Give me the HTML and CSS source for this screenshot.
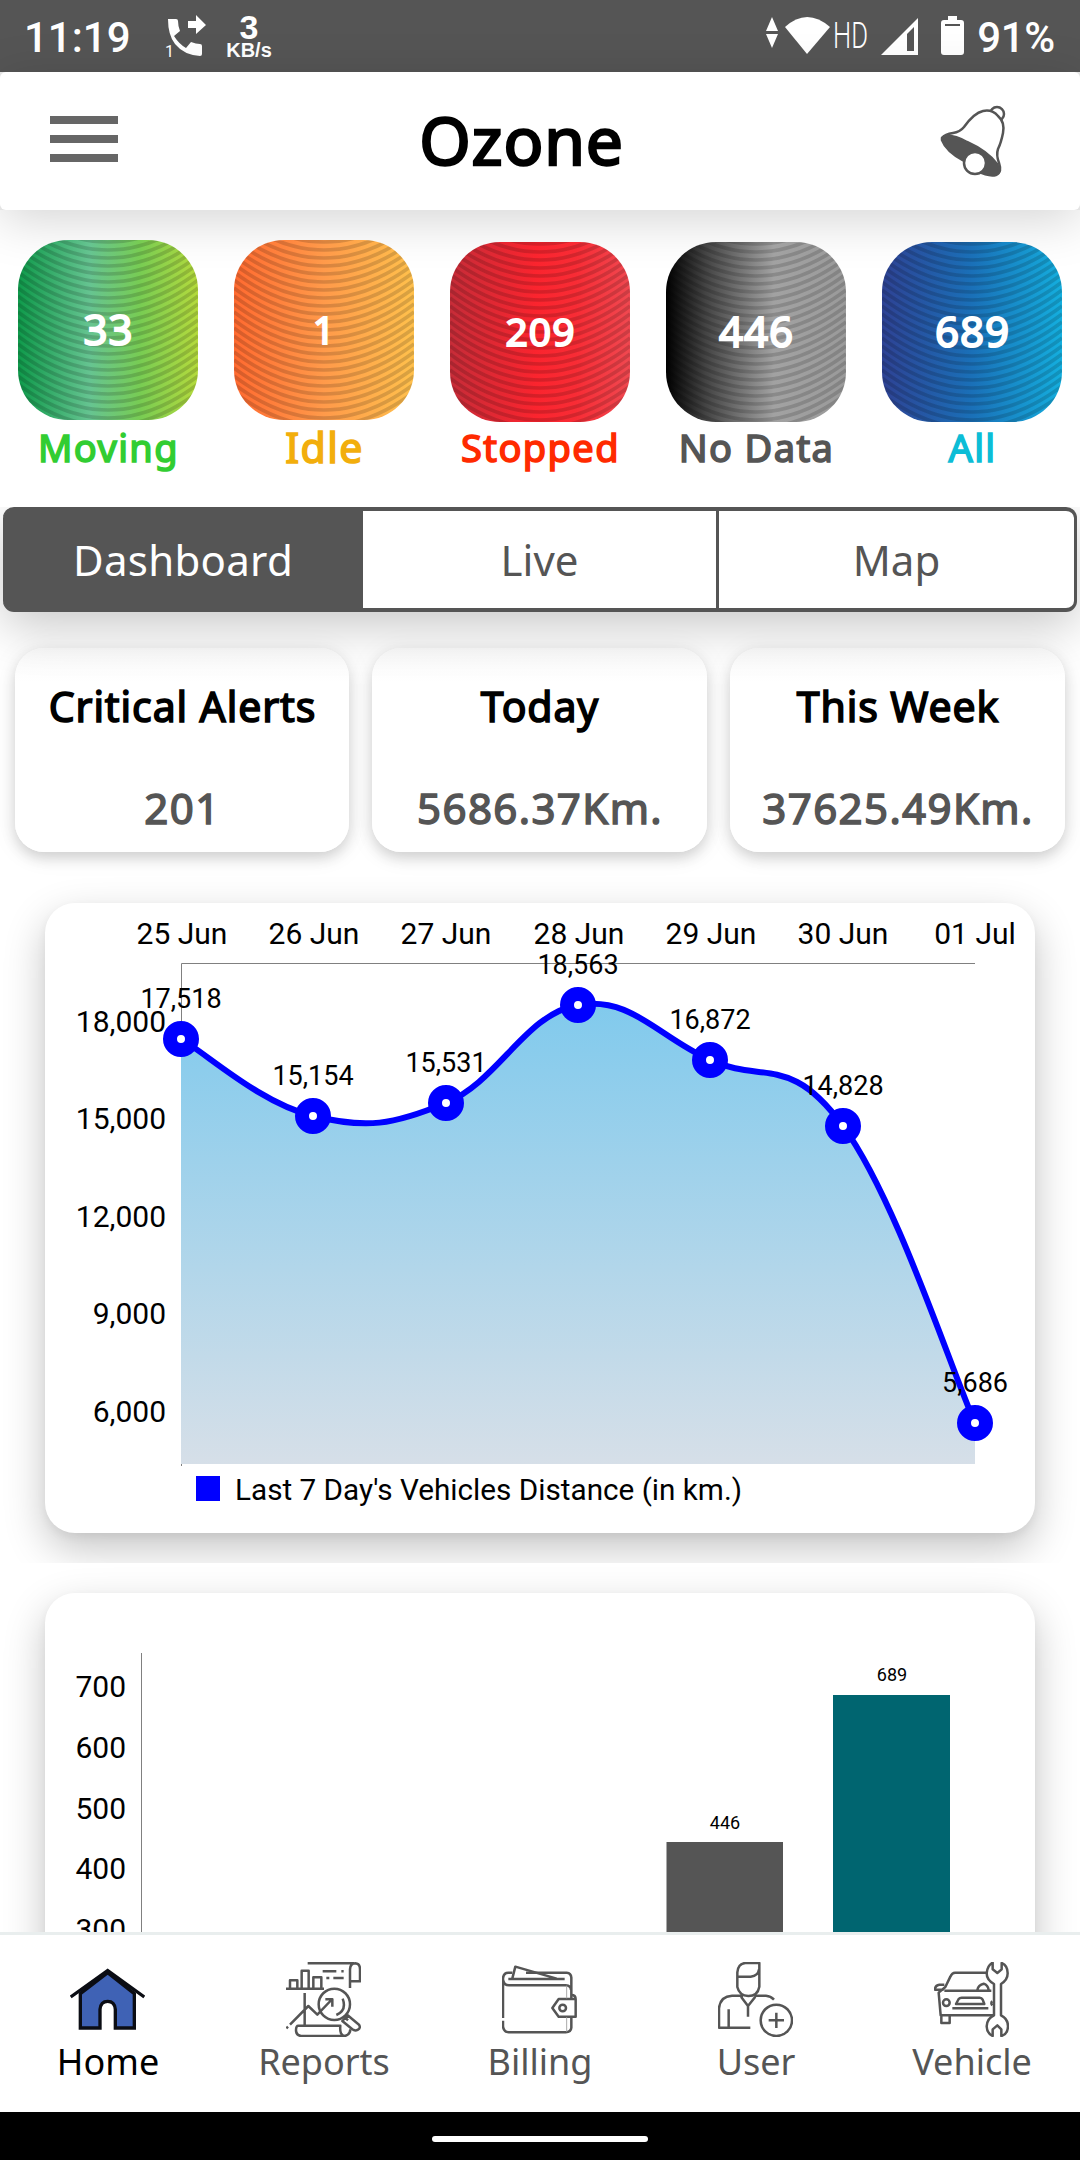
FILE: index.html
```html
<!DOCTYPE html>
<html lang="en">
<head>
    <meta charset="UTF-8">
    <meta name="viewport" content="width=device-width, initial-scale=1.0">
    <title>Ozone</title>
    <link rel="stylesheet" href="styles.css">
</head>
<body>
    <!-- Status Bar -->
    <div class="status-bar">
        <span class="clock">11:19</span>
        <svg class="call-icon" width="44" height="48" viewBox="0 0 44 48" fill="#fff">
            <path d="M4 7h8q2 0 2 2q0 5 2 10l-6 5q5 8 12 12l5-6q5 2 9 2q2 0 2 2v8q0 2-2 2Q20 43 11 32Q4 23 4 7z"/>
            <path d="M24 9h8V3l10 10l-10 9v-6h-8z"/>
            <text x="1" y="45" class="sim">1</text>
        </svg>
        <div class="speed">
            <b>3</b>
            <span>KB/s</span>
        </div>
        <div class="status-right">
            <svg width="104" height="44" viewBox="0 0 104 44" fill="#fff" class="wifi">
                <path d="M7 3l6 14H1zM1 20h12L7 34z"/>
                <path d="M20 13Q42-7 65 13L42 40z"/>
                <text x="68" y="34" textLength="35" lengthAdjust="spacingAndGlyphs" class="hd">HD</text>
            </svg>
            <svg class="signal" width="38" height="44" viewBox="0 0 38 44">
                <path d="M0 41L37 4v37z" fill="#fff"/>
                <path d="M26 20l7-7v24h-7z" fill="#555"/>
            </svg>
            <svg class="battery" width="24" height="44" viewBox="0 0 24 44">
                <path d="M7 2h9v4h4q3 0 3 3v29q0 3-3 3H3q-3 0-3-3V9q0-3 3-3h4z" fill="#fff"/>
                <path d="M4 11h15" stroke="#555" stroke-width="2"/>
            </svg>
            <span class="percent">91%</span>
        </div>
    </div>

    <!-- Header Section -->
    <div class="header-wrap">
        <header>
            <div class="menu">
                <i></i>
                <i></i>
                <i></i>
            </div>
            <h1>Ozone</h1>
            <svg class="bell" width="68" height="72" viewBox="0 0 68 72" fill="none" stroke="#555" stroke-width="2.5">
                <circle cx="57" cy="9" r="7"/>
                <path d="M2 33Q5 29 13 28Q20 27 24 22Q34 8 43 6Q52 4 58 11Q65 17 63 28Q61 38 58 44Q56 50 59 58Q62 67 57 69" fill="#fff"/>
                <path d="M2 33Q8 27 27 37Q47 46 57 59Q62 68 56 70Q49 72 37 66L24 56Q6 46 2 35z" fill="#555"/>
                <circle cx="35" cy="58" r="11" fill="#fff"/>
            </svg>
        </header>
    </div>

    <!-- Vehicle Status Tiles -->
    <svg width="0" height="0" class="defs">
        <defs>
            <pattern id="waves" width="180" height="8" patternUnits="userSpaceOnUse">
                <path d="M0-40Q90 28 180-40M0-32Q90 36 180-32M0-24Q90 44 180-24M0-16Q90 52 180-16M0-8Q90 60 180-8M0 0Q90 68 180 0M0 8Q90 76 180 8" fill="none" stroke="#000" stroke-opacity="0.15" stroke-width="3.6"/>
            </pattern>
        </defs>
    </svg>
    <section class="tiles">
        <div class="tile moving">
            <div class="tile-box">
                <svg width="180" height="180"><rect width="180" height="180" fill="url(#waves)"/></svg>
                <span>33</span>
            </div>
            <p>Moving</p>
        </div>
        <div class="tile idle">
            <div class="tile-box">
                <svg width="180" height="180"><rect width="180" height="180" fill="url(#waves)"/></svg>
                <span>1</span>
            </div>
            <p>Idle</p>
        </div>
        <div class="tile stopped">
            <div class="tile-box">
                <svg width="180" height="180"><rect width="180" height="180" fill="url(#waves)"/></svg>
                <span>209</span>
            </div>
            <p>Stopped</p>
        </div>
        <div class="tile no-data">
            <div class="tile-box">
                <svg width="180" height="180"><rect width="180" height="180" fill="url(#waves)"/></svg>
                <span>446</span>
            </div>
            <p>No Data</p>
        </div>
        <div class="tile all">
            <div class="tile-box">
                <svg width="180" height="180"><rect width="180" height="180" fill="url(#waves)"/></svg>
                <span>689</span>
            </div>
            <p>All</p>
        </div>
    </section>

    <!-- Tabs -->
    <div class="tabs">
        <div class="tab active">Dashboard</div>
        <div class="tab">Live</div>
        <div class="tab">Map</div>
    </div>

    <!-- Scrolling Content -->
    <main>
        <div class="cards">
            <div class="card">
                <h3>Critical Alerts</h3>
                <p>201</p>
            </div>
            <div class="card">
                <h3>Today</h3>
                <p>5686.37Km.</p>
            </div>
            <div class="card">
                <h3>This Week</h3>
                <p>37625.49Km.</p>
            </div>
        </div>

        <!-- Distance Chart -->
        <div class="chart-row">
            <div class="chart distance">
                <svg width="990" height="630" viewBox="45 903 990 630">
                    <defs>
                        <linearGradient id="sky" gradientUnits="userSpaceOnUse" x1="0" y1="963" x2="0" y2="1464">
                            <stop offset="0" stop-color="#79c8ed"/>
                            <stop offset="1" stop-color="#d6dfe8"/>
                        </linearGradient>
                    </defs>
                    <path d="M181.500 1466V963.500H975" class="axis"/>
                    <path d="M181 1039C207 1054 260 1103 313 1116C366 1129 393 1125 446 1103C499 1081 525 1014 578 1005C631 996 657 1036 710 1060C763 1084 790 1053 843 1126C896 1199 949 1364 975 1423V1464H181z" fill="url(#sky)"/>
                    <path d="M181 1039C207 1054 260 1103 313 1116C366 1129 393 1125 446 1103C499 1081 525 1014 578 1005C631 996 657 1036 710 1060C763 1084 790 1053 843 1126C896 1199 949 1364 975 1423" class="line"/>
                    <g class="label end">
                        <text x="166" y="1032">18,000</text>
                        <text x="166" y="1129">15,000</text>
                        <text x="166" y="1227">12,000</text>
                        <text x="166" y="1324">9,000</text>
                        <text x="166" y="1422">6,000</text>
                    </g>
                    <g class="label mid">
                        <text x="182" y="944">25 Jun</text>
                        <text x="314" y="944">26 Jun</text>
                        <text x="446" y="944">27 Jun</text>
                        <text x="579" y="944">28 Jun</text>
                        <text x="711" y="944">29 Jun</text>
                        <text x="843" y="944">30 Jun</text>
                        <text x="975" y="944">01 Jul</text>
                    </g>
                    <g class="value mid">
                        <text x="181" y="1008">17,518</text>
                        <text x="313" y="1085">15,154</text>
                        <text x="446" y="1072">15,531</text>
                        <text x="578" y="974">18,563</text>
                        <text x="710" y="1029">16,872</text>
                        <text x="843" y="1095">14,828</text>
                        <text x="975" y="1392">5,686</text>
                    </g>
                    <g class="dots">
                        <circle cx="181" cy="1039" r="11"/>
                        <circle cx="313" cy="1116" r="11"/>
                        <circle cx="446" cy="1103" r="11"/>
                        <circle cx="578" cy="1005" r="11"/>
                        <circle cx="710" cy="1060" r="11"/>
                        <circle cx="843" cy="1126" r="11"/>
                        <circle cx="975" cy="1423" r="11"/>
                    </g>
                    <rect x="196" y="1476" width="24" height="25" fill="#00f"/>
                    <text x="235" y="1500" class="legend">Last 7 Day's Vehicles Distance (in km.)</text>
                </svg>
            </div>
        </div>

        <!-- Vehicle Count Chart -->
        <div class="chart-row">
            <div class="chart count">
                <svg width="990" height="630" viewBox="45 1593 990 630">
                    <path d="M141.500 1653V2150" class="axis"/>
                    <g class="label end">
                        <text x="126" y="1697">700</text>
                        <text x="126" y="1758">600</text>
                        <text x="126" y="1819">500</text>
                        <text x="126" y="1879">400</text>
                        <text x="126" y="1940">300</text>
                    </g>
                    <rect x="666.500" y="1842" width="116.500" height="300" fill="#555"/>
                    <rect x="833" y="1695" width="117" height="450" fill="#006570"/>
                    <text x="725" y="1829" class="small mid">446</text>
                    <text x="892" y="1681" class="small mid">689</text>
                </svg>
            </div>
        </div>
    </main>

    <!-- Navigation Bar -->
    <nav>
        <div class="nav-item active">
            <svg width="75" height="75" viewBox="0 0 225 225" fill="none" stroke="#0b0d14" stroke-width="10">
                <path d="M31 95L113 32L193 95V198H136V142Q134 118 113 118Q92 118 90 142V198H31z" fill="#3f62b5"/>
                <path d="M2 105L113 26L223 105"/>
            </svg>
            <span>Home</span>
        </div>
        <div class="nav-item">
            <svg width="75" height="75" viewBox="0 0 225 225">
                <path d="M65 4H203M192 78V22Q193 4 208 4Q222 5 222 22V58H193"/>
                <path d="M0 80H114M12 79V55H34V79M47 79V26H68V79M82 79V46H106V79"/>
                <path d="M110 28H151M166 28h7M121 48h9M142 48H173"/>
                <circle cx="145" cy="127" r="47"/>
                <path d="M170 110Q183 145 151 159M56 93V191M12 188L67 132L94 158L136 114M118 112H139V134M1 199L6 194"/>
                <path d="M169 177L185 160L219 188Q225 198 216 203Q207 208 199 202zM178 167l8 8"/>
                <path d="M37 191H163Q160 221 177 222H45Q30 220 30 205Q30 191 37 191M177 222Q193 217 193 202"/>
            </svg>
            <span>Reports</span>
        </div>
        <div class="nav-item">
            <svg width="75" height="75" viewBox="0 0 225 225">
                <path d="M3 168V50Q4 32 19 32H31M72 32H194Q207 33 208 47V111M3 52Q5 70 21 70H191Q207 71 207 84M3 176V193Q5 210 20 211H191Q207 210 208 197V164"/>
                <path d="M19 51H188M31 49L40 14L164 50"/>
                <path d="M170 111H221V164H170L151 138zM208 99Q221 99 221 111"/>
                <circle cx="182" cy="138" r="10"/>
                <path d="M194 71V109M194 166V209" stroke="#aaa" stroke-width="3"/>
            </svg>
            <span>Billing</span>
        </div>
        <div class="nav-item">
            <svg width="75" height="75" viewBox="0 0 225 225">
                <path d="M58 44V31Q60 5 82 3H124V74Q119 102 91 102Q64 101 58 75V44H98Q121 41 123 22"/>
                <path d="M97 197H3V139Q6 103 42 101H75M109 101H144Q158 102 168 113M32 142V196M69 104L90 132L112 104M90 132V164"/>
                <circle cx="175" cy="175" r="47"/>
                <path d="M175 152V198M152 175H198"/>
            </svg>
            <span>User</span>
        </div>
        <div class="nav-item">
            <svg width="75" height="75" viewBox="0 0 225 225">
                <path d="M156 32H63Q54 32 49 44L34 75L14 92L20 160H177M31 86H172M31 68H16Q3 70 3 83H29M22 162V183H47V162M130 84Q133 68 149 65Q162 69 164 84"/>
                <path d="M66 126L74 111Q77 107 83 107H137Q143 107 146 113L151 126zM55 139H163M175 118Q169 123 175 130"/>
                <circle cx="37" cy="122" r="10"/>
                <path d="M176 2V22L190 33L203 22V3Q221 10 221 34Q221 54 201 66V160Q222 170 222 193Q221 217 202 222V202L190 190L176 202V222Q159 214 158 193Q159 169 180 160V66Q158 54 158 34Q160 10 176 2z" fill="#fff"/>
            </svg>
            <span>Vehicle</span>
        </div>
    </nav>

    <!-- Gesture Bar -->
    <footer>
        <div class="pill"></div>
    </footer>
</body>
</html>
```
FILE: styles.css
```css
* {
    box-sizing: border-box;
}

body {
    margin: 0;
    height: 2160px;
    overflow: hidden;
    display: flex;
    flex-direction: column;
    background-color: #fff;
    font-family: 'Noto Sans', sans-serif;
    color: #555;
}

h1, h3, p {
    margin: 0;
}

/* Status Bar */
.status-bar {
    height: 72px;
    flex: none;
    background: #555;
    color: #fff;
    display: flex;
    align-items: center;
    padding: 0 25px 0 24px;
    font-family: Roboto, sans-serif;
}

.clock, .percent {
    font-size: 42px;
    font-weight: 500;
    padding-top: 2px;
}

.clock {
    width: 110px;
}

.percent {
    letter-spacing: -0.3px;
}

.call-icon {
    margin-left: 30px;
}

.sim {
    font-size: 16px;
}

.speed {
    margin-left: 16px;
    width: 50px;
    display: flex;
    flex-direction: column;
    align-items: center;
    font-family: 'Liberation Sans', sans-serif;
    font-weight: bold;
}

.speed b {
    font-size: 34px;
    line-height: 29px;
}

.speed span {
    font-size: 20px;
    line-height: 17px;
}

.status-right {
    margin-left: auto;
    display: flex;
    align-items: center;
}

.wifi {
    overflow: visible;
}

.hd {
    font-size: 37px;
    font-weight: 300;
}

.signal {
    margin-left: 12px;
}

.battery {
    margin: 0 12px 0 22px;
}

/* Header Section */
.header-wrap {
    flex: none;
    background: #e4e4e4;
    height: 138px;
    box-shadow: 0 10px 50px rgba(0, 0, 0, 0.17);
}

header {
    height: 138px;
    padding: 0 72px 0 50px;
    border-radius: 6px;
    background: #fff;
    display: flex;
    align-items: center;
    justify-content: space-between;
}

.menu {
    width: 68px;
    display: flex;
    flex-direction: column;
    gap: 11px;
    padding-bottom: 4px;
}

.menu i {
    height: 8px;
    background: #666;
}

h1 {
    color: #000;
    font-size: 66px;
    font-weight: 400;
    line-height: 134px;
    margin: 0 15px 4px 0;
    letter-spacing: 0.8px;
    -webkit-text-stroke: 2.4px #000;
}

/* Vehicle Status Tiles */
.defs {
    position: absolute;
}

.tiles {
    height: 297px;
    flex: none;
    display: grid;
    grid-template-columns: repeat(5, 216px);
    padding-top: 30px;
    text-align: center;
}

.tile {
    display: flex;
    flex-direction: column;
    align-items: center;
}

.tile-box {
    display: grid;
    place-items: center;
    width: 180px;
    height: 180px;
    border-radius: 50px;
    overflow: hidden;
    color: #fff;
    font-size: 42px;
    font-weight: 400;
    letter-spacing: 1px;
    -webkit-text-stroke: 2px #fff;
}

.tile-box svg, .tile-box span {
    grid-area: 1 / 1;
}

.tile-box span {
    padding: 0 0 3px 1px;
}

.tile p {
    font-size: 38px;
    font-weight: 400;
    line-height: 54px;
    letter-spacing: 1.4px;
    padding-left: 1px;
    -webkit-text-stroke: 1.6px;
}

.stopped .tile-box, .no-data .tile-box, .all .tile-box {
    margin-top: 2px;
}

.stopped p, .no-data p, .all p {
    margin-top: -2px;
}

.moving .tile-box {
    background: linear-gradient(90deg, #0f9a4b, #66c491 40%, #78cc53 68%, #b4da3c);
}

.moving p {
    color: #32cd32;
}

.idle .tile-box {
    background: linear-gradient(90deg, #ff6a30, #ff9a4a 50%, #ffc04c);
    font-size: 39px;
}

.idle p {
    color: #f2ae0c;
    font-size: 41px;
}

.stopped .tile-box {
    background: linear-gradient(90deg, #c62c38, #fb242e 48%, #f82c35 70%, #f04850);
    font-size: 39px;
}

.stopped p {
    color: #ff2a00;
}

.no-data .tile-box {
    background: linear-gradient(90deg, #000, #444 22%, #a2a2a2 60%, #9a9a9a);
}

.all .tile-box {
    background: linear-gradient(90deg, #2e4294, #1a70b8 50%, #14aede);
}

.all p {
    color: #0cbdd6;
}

/* Tabs */
.tabs {
    flex: none;
    height: 105px;
    margin: 0 3px;
    display: grid;
    grid-template-columns: 360px 356px 1fr;
    border: 4px solid #555;
    border-left-width: 0;
    border-right-width: 3px;
    border-radius: 11px;
    background: #fff;
    font-size: 42px;
    line-height: 97px;
    text-align: center;
    box-shadow: 0 14px 50px rgba(0, 0, 0, 0.22);
    clip-path: inset(0 -10px -90px -10px);
}

.tab + .tab {
    border-right: 3px solid #555;
}

.tab:last-child {
    border-right: none;
}

.tab.active {
    background: #555;
    color: #fff;
    border-radius: 7px 0 0 7px;
    letter-spacing: 0.3px;
}

/* Cards */
main {
    flex: 1;
    min-height: 0;
    overflow: hidden;
}

.cards {
    display: grid;
    grid-template-columns: 334px 335px 335px;
    justify-content: space-between;
    padding: 36px 15px 0;
}

.card {
    height: 204px;
    padding-top: 30px;
    border-radius: 29px;
    background: linear-gradient(#fafafa, #fff 35px);
    text-align: center;
    box-shadow: 0 6px 14px rgba(0, 0, 0, 0.16), 0 2px 30px rgba(0, 0, 0, 0.06);
}

.card h3 {
    color: #000;
    font-size: 41px;
    font-weight: 400;
    line-height: 56px;
    letter-spacing: 0.9px;
    padding-left: 1px;
    -webkit-text-stroke: 1.6px;
}

.card p {
    margin-top: 46px;
    font-size: 42px;
    font-weight: 400;
    line-height: 56px;
    letter-spacing: 1.4px;
    padding-left: 1px;
    -webkit-text-stroke: 1.5px;
}

/* Charts */
.chart-row {
    padding: 51px 45px 30px;
    overflow: hidden;
}

.chart-row + .chart-row {
    padding-top: 30px;
}

.chart {
    height: 630px;
    border-radius: 30px;
    background: #fff;
    box-shadow: 0 16px 42px rgba(0, 0, 0, 0.23), 0 4px 10px rgba(0, 0, 0, 0.05);
}

.chart svg {
    display: block;
}

.chart text {
    font-family: Roboto, sans-serif;
    fill: #000;
}

.axis {
    fill: none;
    stroke: #808080;
    stroke-width: 1;
}

.line {
    fill: none;
    stroke: #00f;
    stroke-width: 6;
}

.dots circle {
    fill: #fff;
    stroke: #00f;
    stroke-width: 14;
}

.label {
    font-size: 30px;
}

.legend {
    font-size: 29.7px;
}

.value {
    font-size: 27px;
}

.small {
    font-size: 18px;
}

.end {
    text-anchor: end;
}

.mid {
    text-anchor: middle;
}

/* Navigation Bar */
nav {
    flex: none;
    height: 180px;
    border-top: 3px solid #e9eeee;
    background: #fff;
    display: grid;
    grid-template-columns: repeat(5, 216px);
}

.nav-item {
    padding-top: 27px;
    display: flex;
    flex-direction: column;
    align-items: center;
    font-size: 36px;
    line-height: 50px;
}

.nav-item.active {
    color: #000;
}

.nav-item svg {
    margin-left: -1px;
}

.nav-item:not(.active) svg {
    fill: none;
    stroke: #555;
    stroke-width: 7.5;
    stroke-linejoin: round;
}

/* Gesture Bar */
footer {
    flex: none;
    height: 48px;
    background: #000;
    display: flex;
    justify-content: center;
    padding-top: 24px;
}

.pill {
    width: 216px;
    height: 6px;
    border-radius: 3px;
    background: #fff;
}
```
